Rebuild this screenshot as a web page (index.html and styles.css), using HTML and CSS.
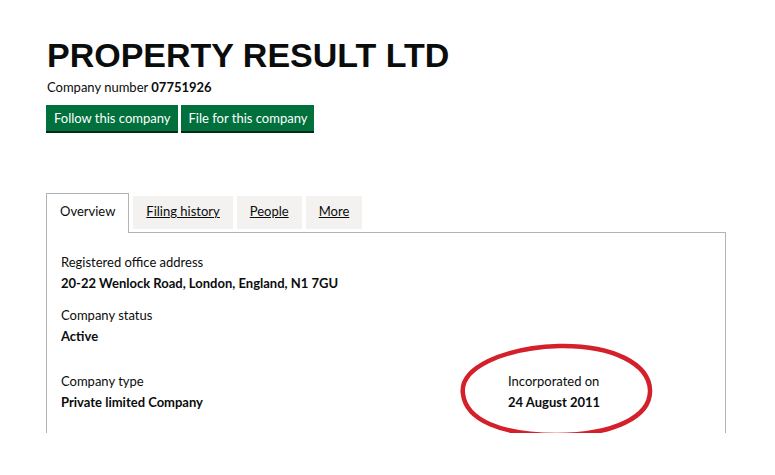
FILE: index.html
```html
<!DOCTYPE html>
<html lang="en">
<head>
    <meta charset="UTF-8">
    <meta name="viewport" content="width=device-width, initial-scale=1.0">
    <title>PROPERTY RESULT LTD - Overview</title>
    <link rel="stylesheet" href="styles.css">
</head>
<body>
    <div class="page">
        <h1 class="heading">PROPERTY RESULT LTD</h1>
        <p class="company-number">Company number <strong>07751926</strong></p>

        <div class="actions">
            <a class="button" href="#">Follow this company</a>
            <a class="button" href="#">File for this company</a>
        </div>

        <ul class="tabs">
            <li class="tab active">Overview</li>
            <li class="tab"><a href="#">Filing history</a></li>
            <li class="tab"><a href="#">People</a></li>
            <li class="tab"><a href="#">More</a></li>
        </ul>

        <div class="panel">
            <dl class="field">
                <dt>Registered office address</dt>
                <dd>20-22 Wenlock Road, London, England, N1 7GU</dd>
            </dl>
            <dl class="field">
                <dt>Company status</dt>
                <dd>Active</dd>
            </dl>
            <div class="row">
                <dl class="field">
                    <dt>Company type</dt>
                    <dd>Private limited Company</dd>
                </dl>
                <dl class="field">
                    <dt>Incorporated on</dt>
                    <dd>24 August 2011</dd>
                </dl>
            </div>
        </div>

        <!-- hand-drawn highlight round the incorporation date -->
        <svg class="highlight" width="204" height="104" viewBox="0 0 204 104">
            <path d="M10 54 C6 28 50 8 106 6 C160 5 196 24 197 50 C198 77 160 95 104 95 C48 95 13 80 10 54 Z"
                  fill="none" stroke="#d3202b" stroke-width="4.5"/>
        </svg>
    </div>
</body>
</html>
```

FILE: styles.css
```css
body {
    margin: 0;
    background: #fff;
    color: #0b0c0c;
    font-family: Lato, "Noto Sans", sans-serif;
    font-size: 13px;
    line-height: 21px;
}
.page {
    position: relative;
    width: 680px;
    padding: 36px 0 0 46px;
}
.heading {
    margin: 0;
    font-family: "Liberation Sans", Arial, sans-serif;
    font-size: 34px;
    line-height: 38px;
    font-weight: bold;
    padding-left: 1px;
}
.company-number {
    margin: 3px 0 0 0;
    padding-left: 1px;
}
.actions {
    display: flex;
    gap: 3px;
    margin-top: 7px;
}
.button {
    display: block;
    background: #00703c;
    color: #fff;
    text-decoration: none;
    padding: 3px 7px 2px 8px;
    box-shadow: 0 2px 0 #002d18;
    height: 21px;
}
.tabs {
    display: flex;
    gap: 4px;
    margin: 62px 0 0 0;
    padding: 0;
    list-style: none;
    position: relative;
    z-index: 1;
}
.tab {
    background: #f3f2f1;
    padding: 5px 13px 6px;
    margin-top: 3px;
    margin-bottom: 3px;
}
.tab a {
    color: #0b0c0c;
}
.tab.active {
    background: #fff;
    border: 1px solid #b1b4b6;
    border-bottom: none;
    padding: 7px 13px 11px;
    margin-top: 0;
    margin-bottom: -1px;
}
.panel {
    border: 1px solid #b1b4b6;
    border-bottom: none;
    padding: 19px 14px 20px;
}
.field {
    margin: 0 0 11px 0;
}
.field dt {
    margin: 0;
}
.field dd {
    margin: 0;
    font-weight: bold;
}
.row {
    display: grid;
    grid-template-columns: 447px 1fr;
    margin-top: 24px;
}
.row .field {
    margin-bottom: 0;
}
.highlight {
    position: absolute;
    left: 453px;
    top: 340px;
}
```
